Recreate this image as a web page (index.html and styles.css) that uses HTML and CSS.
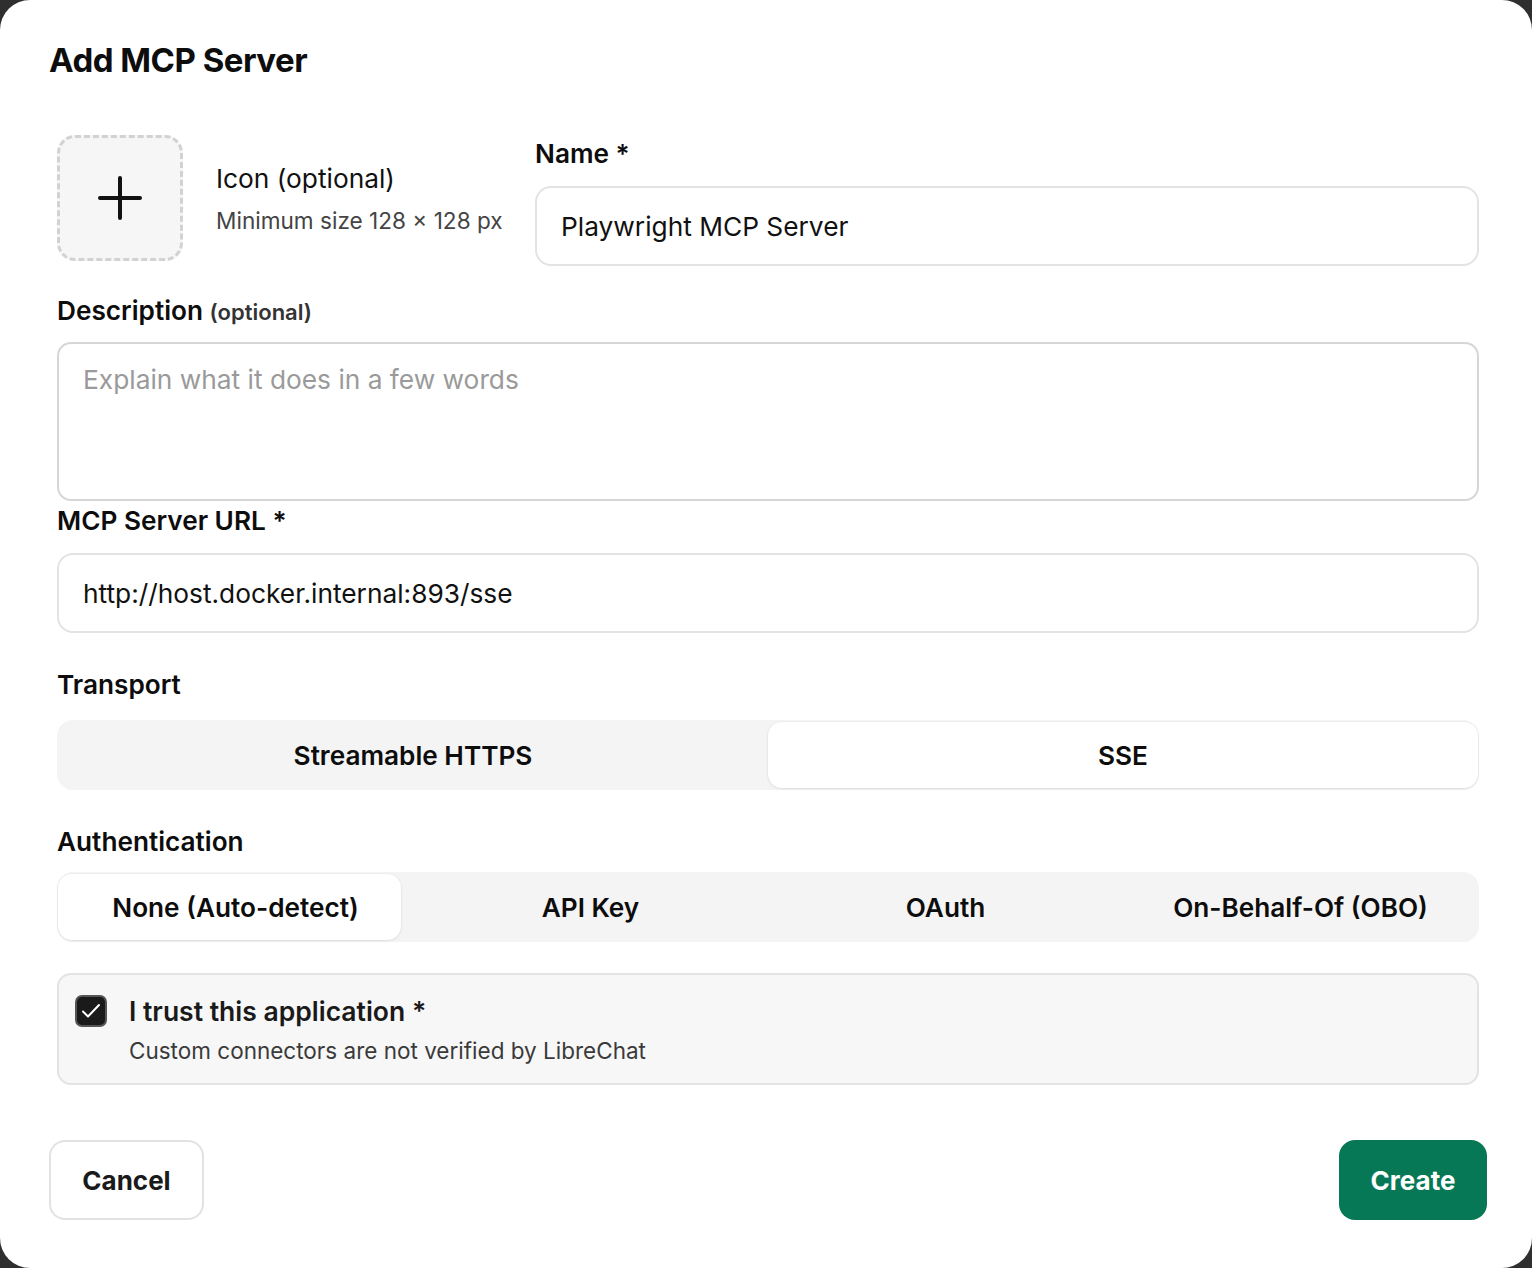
FILE: index.html
```html
<!DOCTYPE html>
<html lang="en">
<head>
<meta charset="utf-8">
<title>Add MCP Server</title>
<link rel="stylesheet" href="styles.css">
</head>
<body>
<div class="dialog">
  <h1 class="title">Add MCP Server</h1>
  <div class="form">
    <div class="top-row">
      <div class="icon-group">
        <div class="icon-box">
          <svg width="48" height="48" viewBox="0 0 24 24" fill="none" stroke="#111" stroke-width="2" stroke-linecap="round"><path d="M12 2v20M2 12h20"/></svg>
        </div>
        <div class="icon-text">
          <div class="icon-title">Icon (optional)</div>
          <div class="icon-sub">Minimum size 128 × 128 px</div>
        </div>
      </div>
      <div class="name-col">
        <label class="label">Name *</label>
        <input class="input" type="text" value="Playwright MCP Server">
      </div>
    </div>

    <label class="label desc-label">Description <span class="opt">(optional)</span></label>
    <textarea class="textarea" placeholder="Explain what it does in a few words"></textarea>

    <label class="label url-label">MCP Server URL *</label>
    <input class="input" type="text" value="http://host.docker.internal:893/sse">

    <label class="label transport-label">Transport</label>
    <div class="segment transport">
      <div class="seg-item">Streamable HTTPS</div>
      <div class="seg-item active">SSE</div>
    </div>

    <label class="label auth-label">Authentication</label>
    <div class="segment auth">
      <div class="seg-item active">None (Auto-detect)</div>
      <div class="seg-item">API Key</div>
      <div class="seg-item">OAuth</div>
      <div class="seg-item">On-Behalf-Of (OBO)</div>
    </div>

    <div class="trust">
      <div class="checkbox">
        <svg width="24" height="24" viewBox="0 0 24 24" fill="none" stroke="#fff" stroke-width="2" stroke-linecap="round" stroke-linejoin="round"><path d="M4 12.5l5 5L20 6"/></svg>
      </div>
      <div class="trust-text">
        <div class="trust-title">I trust this application *</div>
        <div class="trust-sub">Custom connectors are not verified by LibreChat</div>
      </div>
    </div>
  </div>
  <div class="footer">
    <button class="btn btn-cancel">Cancel</button>
    <button class="btn btn-create">Create</button>
  </div>
</div>
</body>
</html>
```
FILE: styles.css
```css
* { box-sizing: border-box; }
html, body { margin: 0; padding: 0; }
body {
  background: #2f2f2f;
  font-family: Inter, "Noto Sans", sans-serif;
  color: #0d0d0d;
}
.dialog {
  width: 1532px;
  height: 1268px;
  background: #fff;
  border-radius: 30px;
  padding: 38px 45px 0 49px;
  overflow: hidden;
}
.title {
  margin: 0;
  font-size: 33px;
  line-height: 44px;
  font-weight: 700;
  letter-spacing: -0.5px;
}
.form {
  margin: 53px 0 0 8px;
  width: 1422px;
  display: flex;
  flex-direction: column;
}
.top-row {
  display: flex;
  align-items: flex-start;
}
.icon-group {
  display: flex;
  align-items: center;
  gap: 33px;
  width: 478px;
  flex: none;
}
.icon-box {
  width: 126px;
  height: 126px;
  border: 3px dashed #d2d2d2;
  border-radius: 18px;
  background: #f6f6f6;
  display: flex;
  align-items: center;
  justify-content: center;
  flex: none;
}
.icon-text { display: flex; flex-direction: column; gap: 12px; white-space: nowrap; margin-top: 2px; }
.icon-title { font-size: 26.3px; line-height: 32px; color: #111; }
.icon-sub { font-size: 22.6px; line-height: 28px; color: #444; }
.name-col {
  flex: 1;
  display: flex;
  flex-direction: column;
  padding-top: 3px;
}
.label {
  display: block;
  font-size: 26.2px;
  line-height: 32px;
  font-weight: 600;
  color: #0d0d0d;
}
.name-col .label { margin-bottom: 16px; }
.opt { font-size: 22px; font-weight: 600; color: #333; }
.input {
  width: 100%;
  height: 80px;
  border: 2px solid #e3e3e3;
  border-radius: 16px;
  padding: 0 24px;
  font-family: inherit;
  font-size: 26.3px;
  color: #111;
  background: #fff;
  outline: none;
}
.textarea {
  width: 100%;
  height: 159px;
  border: 2px solid #d6d6d6;
  border-radius: 14px;
  padding: 20px 24px;
  font-family: inherit;
  font-size: 26.3px;
  line-height: 32px;
  resize: none;
  outline: none;
  display: block;
}
.textarea::placeholder { color: #9a9a9a; }
.desc-label { margin-top: 29px; margin-bottom: 14px; }
.url-label { margin-top: 4px; margin-bottom: 16px; }
.transport-label { margin-top: 36px; margin-bottom: 19px; }
.auth-label { margin-top: 36px; margin-bottom: 14px; }
.segment {
  display: grid;
  height: 70px;
  background: #f4f4f4;
  border-radius: 16px;
  padding: 2px 1px;
}
.transport { grid-template-columns: 1fr 1fr; }
.auth { grid-template-columns: repeat(4, 1fr); }
.seg-item {
  position: relative;
  isolation: isolate;
  display: flex;
  align-items: center;
  justify-content: center;
  font-size: 26.2px;
  font-weight: 600;
  color: #0d0d0d;
}
.seg-item.active::before {
  content: "";
  position: absolute;
  inset: 0;
  background: #fff;
  border-radius: 14px;
  box-shadow: 0 1px 3px rgba(0,0,0,0.08), 0 0 0 1px rgba(0,0,0,0.02);
  z-index: -1;
}
.auth .seg-item.active::before { right: 12px; }
.trust {
  margin-top: 31px;
  height: 112px;
  background: #f7f7f7;
  border: 2px solid #e3e3e3;
  border-radius: 14px;
  display: flex;
  align-items: flex-start;
  padding: 19px 16px;
  gap: 22px;
}
.checkbox {
  width: 32px;
  height: 32px;
  background: #1a1a1a;
  border: 2px solid #555;
  border-radius: 7px;
  display: flex;
  align-items: center;
  justify-content: center;
  flex: none;
  margin-top: 1px;
}
.trust-text { display: flex; flex-direction: column; gap: 8px; }
.trust-title { font-size: 26.5px; line-height: 34px; font-weight: 600; color: #1a1a1a; }
.trust-sub { font-size: 22.5px; line-height: 30px; color: #3a3a3a; }
.footer {
  margin-top: 55px;
  display: flex;
  justify-content: space-between;
  align-items: center;
}
.btn {
  height: 80px;
  border-radius: 16px;
  font-family: inherit;
  font-size: 26px;
  font-weight: 700;
  cursor: pointer;
}
.btn-cancel {
  width: 155px;
  background: #fff;
  border: 2px solid #e2e2e2;
  color: #1a1a1a;
}
.btn-create {
  width: 148px;
  background: #077856;
  border: none;
  color: #fff;
}
```
